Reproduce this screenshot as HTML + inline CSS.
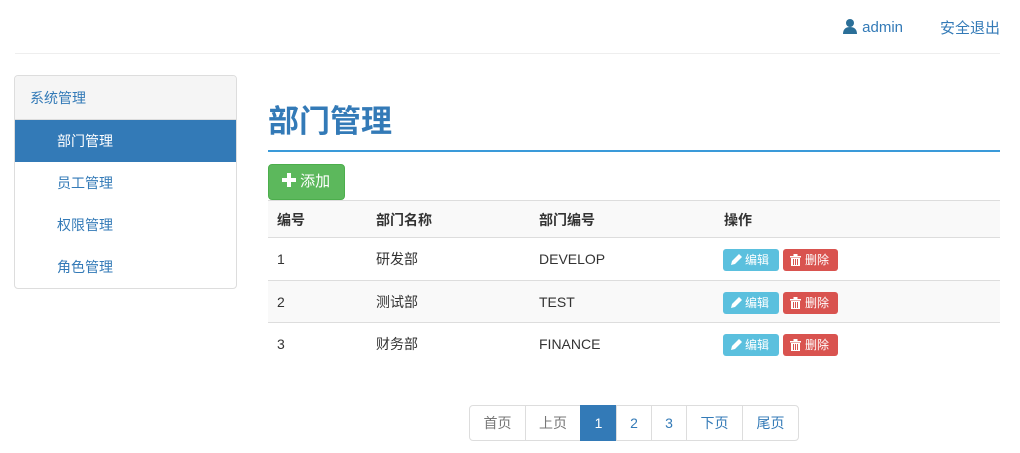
<!DOCTYPE html>
<html><head><meta charset="utf-8"><style>
*{box-sizing:border-box;margin:0;padding:0}
body{width:1020px;height:453px;background:#fff;font-family:"Liberation Sans","Noto Sans CJK SC",sans-serif;font-size:14px;color:#333;position:relative;overflow:hidden}
.a{position:absolute}
.blue{color:#337ab7}
.side{left:14px;top:75px;width:223px;height:214px;border:1px solid #ddd;border-radius:4px;overflow:hidden}
.side div{height:42px;line-height:42px;padding-left:42px;color:#337ab7}
.side .h{background:#f5f5f5;padding-left:15px;height:44px;line-height:44px;border-bottom:1px solid #ddd}
.side .act{background:#337ab7;color:#fff}
.row{left:268px;width:732px;height:42px;line-height:42px;border-top:1px solid #ddd}
.row span{position:absolute}
.btn{position:absolute;top:11px;height:22px;line-height:22px;border-radius:3px;color:#fff;font-size:12px;padding-left:22px}
.btn svg{position:absolute;left:7px;top:5px}
.e{left:455px;width:56px;background:#5bc0de}
.d{left:515px;width:55px;background:#d9534f}
.pg{top:405px;height:36px;border:1px solid #ddd;line-height:34px;text-align:center;color:#777}
</style></head><body>
<div class="a blue" style="left:842px;top:18px;font-size:15px"><svg width="16" height="16" viewBox="0 0 16 16" style="vertical-align:-2px"><circle cx="8" cy="5" r="4" fill="#2b6f98"/><path d="M1 16c0-5 3-7 7-7s7 2 7 7z" fill="#2b6f98"/></svg> admin</div>
<div class="a blue" style="left:940px;top:17px;font-size:15px">安全退出</div>
<div class="a" style="left:15px;top:53px;width:985px;border-top:1px solid #eee"></div>
<div class="a side"><div class="h">系统管理</div><div class="act">部门管理</div><div>员工管理</div><div>权限管理</div><div>角色管理</div></div>
<div class="a blue" style="left:268px;top:96px;font-size:31px;font-weight:bold">部门管理</div>
<div class="a" style="left:268px;top:150px;width:732px;border-top:2px solid #3a9ad9"></div>
<div class="a" style="left:268px;top:164px;width:77px;height:36px;background:#5cb85c;border:1px solid #4cae4c;border-radius:4px;color:#fff;line-height:34px;padding-left:13px;font-size:15px"><svg width="14" height="14" viewBox="0 0 14 14" style="vertical-align:-1px"><path d="M5 0h4v5h5v4H9v5H5V9H0V5h5z" fill="#fff"/></svg> 添加</div>
<div class="a row" style="top:200px;height:38px;line-height:38px;background:#f9f9f9;font-weight:bold;border-bottom:1px solid #ddd"><span style="left:9px">编号</span><span style="left:108px">部门名称</span><span style="left:271px">部门编号</span><span style="left:456px">操作</span></div>
<div class="a row" style="top:238px;border-top:0"><span style="left:9px">1</span><span style="left:108px">研发部</span><span style="left:271px">DEVELOP</span><span class="btn e"><svg width="12" height="12" viewBox="0 0 12 12"><path d="M9 0l3 3-7 7-4 1 1-4z" fill="#fff"/></svg>编辑</span><span class="btn d"><svg width="11" height="12" viewBox="0 0 11 12"><path d="M0 2h11v1.5H0zM3.5 0h4v2h-4zM1 4h9v8H1zM3 5v6h1V5zm2 0v6h1V5zm2 0v6h1V5z" fill="#fff" fill-rule="evenodd"/></svg>删除</span></div>
<div class="a row" style="top:280px;background:#f9f9f9"><span style="left:9px">2</span><span style="left:108px">测试部</span><span style="left:271px">TEST</span><span class="btn e"><svg width="12" height="12" viewBox="0 0 12 12"><path d="M9 0l3 3-7 7-4 1 1-4z" fill="#fff"/></svg>编辑</span><span class="btn d"><svg width="11" height="12" viewBox="0 0 11 12"><path d="M0 2h11v1.5H0zM3.5 0h4v2h-4zM1 4h9v8H1zM3 5v6h1V5zm2 0v6h1V5zm2 0v6h1V5z" fill="#fff" fill-rule="evenodd"/></svg>删除</span></div>
<div class="a row" style="top:322px"><span style="left:9px">3</span><span style="left:108px">财务部</span><span style="left:271px">FINANCE</span><span class="btn e"><svg width="12" height="12" viewBox="0 0 12 12"><path d="M9 0l3 3-7 7-4 1 1-4z" fill="#fff"/></svg>编辑</span><span class="btn d"><svg width="11" height="12" viewBox="0 0 11 12"><path d="M0 2h11v1.5H0zM3.5 0h4v2h-4zM1 4h9v8H1zM3 5v6h1V5zm2 0v6h1V5zm2 0v6h1V5z" fill="#fff" fill-rule="evenodd"/></svg>删除</span></div>
<div class="a pg" style="left:469px;width:57px;border-radius:4px 0 0 4px">首页</div>
<div class="a pg" style="left:525px;width:56px">上页</div>
<div class="a pg" style="left:580px;width:37px;background:#337ab7;border-color:#337ab7;color:#fff">1</div>
<div class="a pg" style="left:616px;width:36px;color:#337ab7">2</div>
<div class="a pg" style="left:651px;width:36px;color:#337ab7">3</div>
<div class="a pg" style="left:686px;width:57px;color:#337ab7">下页</div>
<div class="a pg" style="left:742px;width:57px;border-radius:0 4px 4px 0;color:#337ab7">尾页</div>
</body></html>
